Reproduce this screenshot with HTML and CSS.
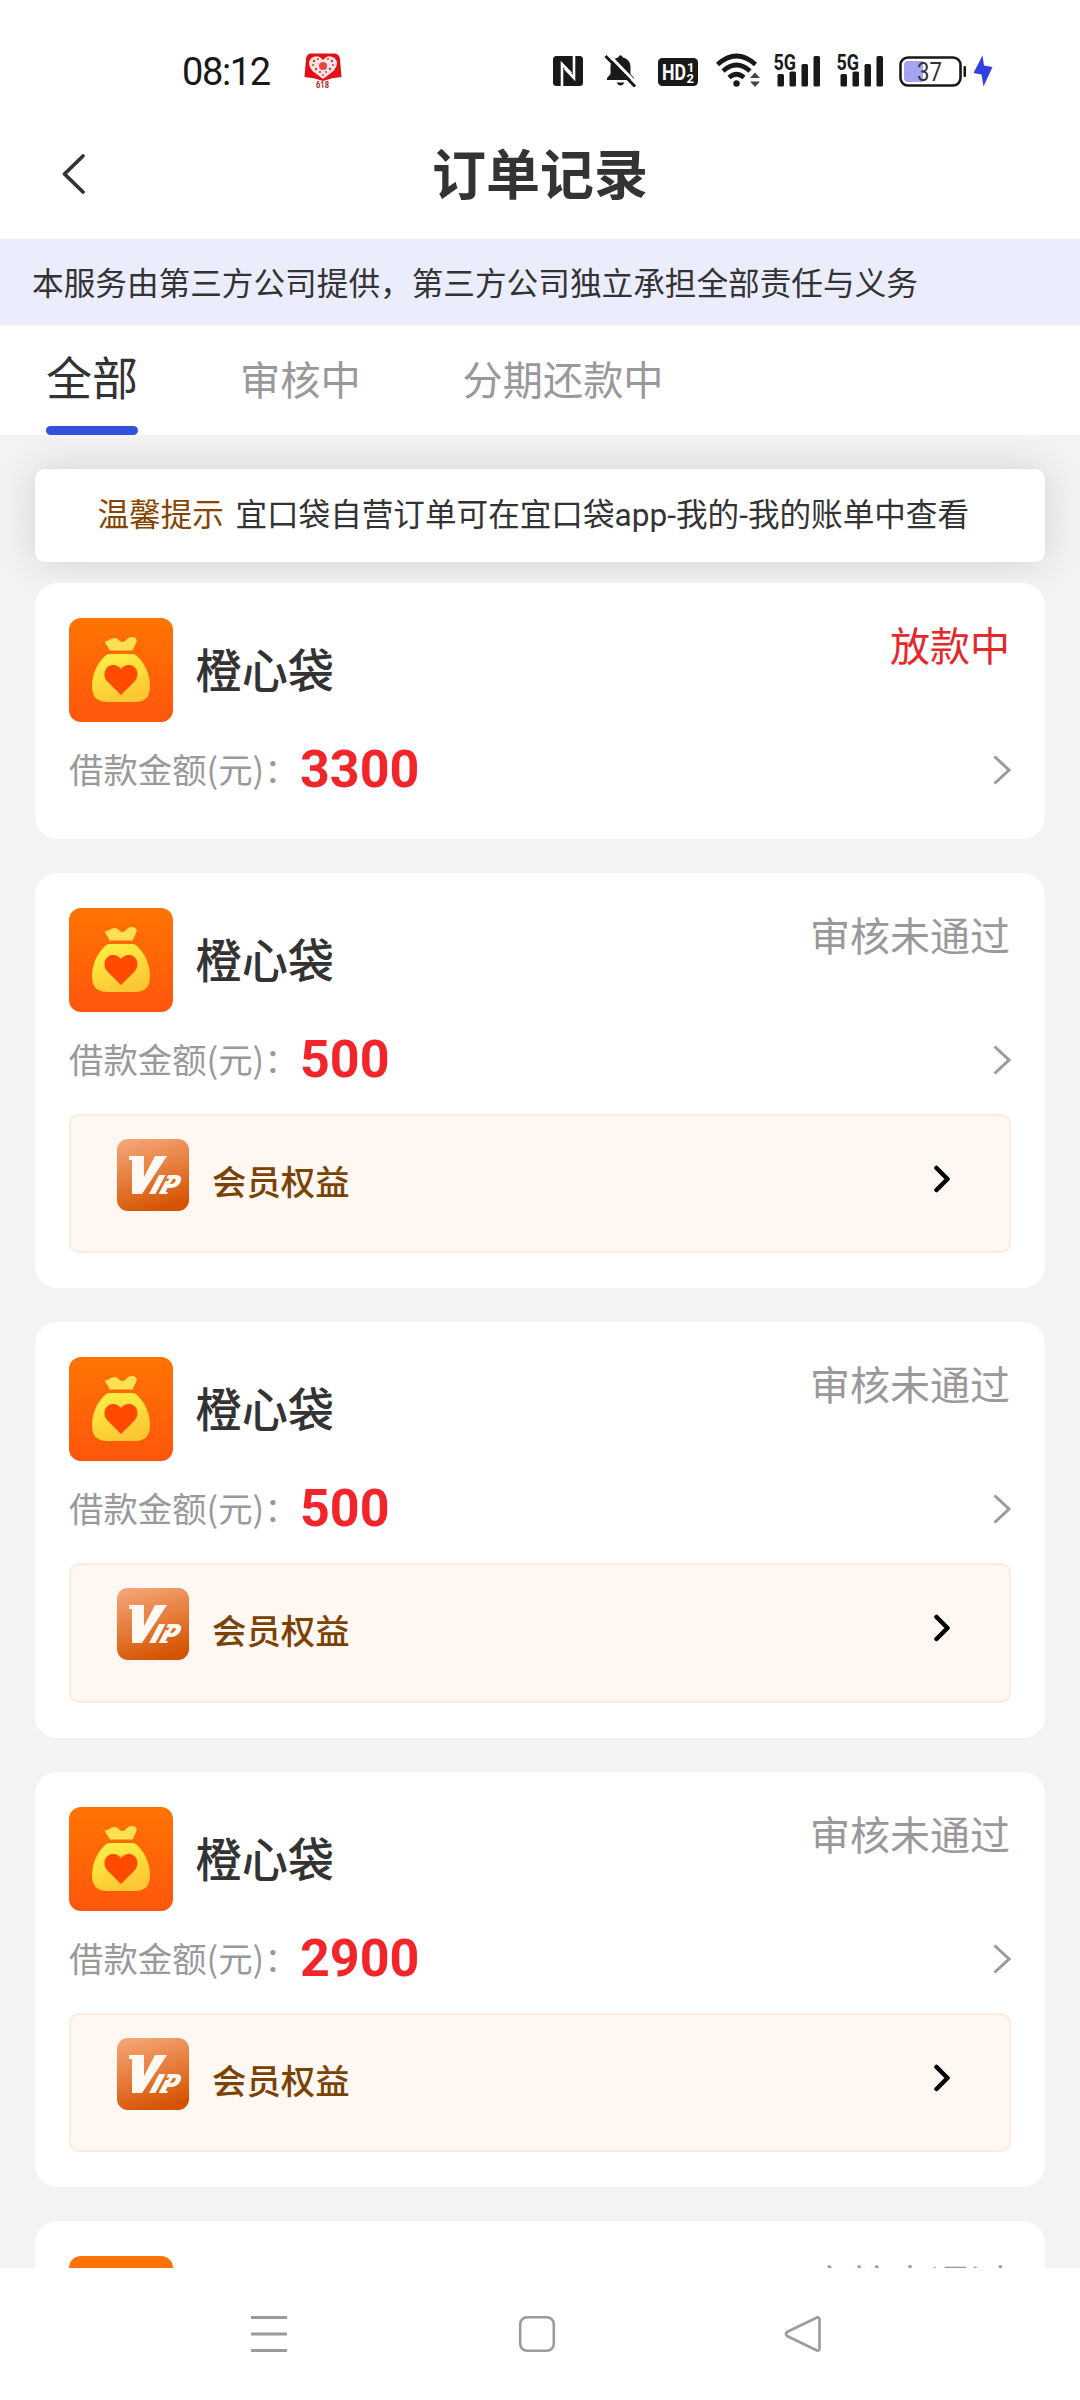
FILE: index.html
```html
<!DOCTYPE html>
<html lang="zh-CN">
<head>
<meta charset="utf-8">
<title>订单记录</title>
<link rel="stylesheet" href="styles.css">
</head>
<body>
<svg class="defs" width="0" height="0" aria-hidden="true">
  <defs>
    <linearGradient id="bagBg" x1="0" y1="0" x2="0" y2="1"><stop offset="0" stop-color="#ff7403"/><stop offset="1" stop-color="#ff560c"/></linearGradient>
    <linearGradient id="bagFill" x1="0" y1="0" x2="0.4" y2="1"><stop offset="0" stop-color="#fff04a"/><stop offset="0.5" stop-color="#fde03c"/><stop offset="1" stop-color="#fdc634"/></linearGradient>
    <linearGradient id="vipBg" x1="0.3" y1="0" x2="0.6" y2="1"><stop offset="0" stop-color="#f3a373"/><stop offset="0.5" stop-color="#e67b38"/><stop offset="1" stop-color="#d45200"/></linearGradient>
    <symbol id="bag" viewBox="0 0 104 104">
      <rect width="104" height="104" rx="12" fill="url(#bagBg)"/>
      <path d="M36 23C39 24 42 19.500 46 20C50 20.500 50 24 53.500 24C57 24 58 19 62.500 19C66 18.500 68.500 21 67.500 24L63.500 32.500H40.500C39.500 28 35.500 26 36 23Z" fill="#ffe052"/>
      <path d="M41 36H63C66 36 67 37 69 39C77 47 81 58 81 68C81 79 76 84 66 84H38C28 84 23 79 23 68C23 58 27 47 35 39C37 37 38 36 41 36Z" fill="url(#bagFill)"/>
      <path d="M52 77L38 63C33 57 36 47 44 47C48 47 50.500 49 52 51C53.500 49 56 47 60 47C68 47 71 57 66 63Z" fill="#ff4a00"/>
    </symbol>
    <symbol id="vip" viewBox="0 0 72 72">
      <rect width="72" height="72" rx="11" fill="url(#vipBg)"/>
      <path d="M12 17H27V38L38 17H50L25 55H15V21H12Z" fill="#fff9f3"/>
      <path d="M42 36H48.500L38.500 55H32Z" fill="#fff9f3"/>
      <path fill-rule="evenodd" d="M51 36H59C65 36 65.500 40.500 62.500 44.500C60 48 57 49 53 49H50.500L48.500 53H51L50 55H41.500L48.500 42H51L52.500 39.500H49.500ZM56 40L53 45H54.500C58 44.500 60 40.500 58 40Z" fill="#fff9f3"/>
    </symbol>
    <symbol id="go" viewBox="0 0 18 30"><path d="M1.500 1.500L16 15L1.500 28.500" fill="none" stroke="#9b9b9b" stroke-width="3"/></symbol>
    <symbol id="goVip" viewBox="0 0 18 28"><path d="M3.500 3L14.500 14L3.500 25" fill="none" stroke="#000" stroke-width="4.500" stroke-linecap="round" stroke-linejoin="round"/></symbol>
    <symbol id="signal" viewBox="0 0 50 36">
      <text x="-0.500" y="16.500" class="signal-text" textLength="22.500" lengthAdjust="spacingAndGlyphs">5G</text>
      <g fill="#191919"><rect x="3.500" y="21" width="6.500" height="12.500" rx="1.500"/><rect x="15.500" y="18.500" width="6.500" height="15" rx="1.500"/><rect x="27.500" y="11" width="6.500" height="22.500" rx="1.500"/><rect x="39.500" y="3" width="6.500" height="30.500" rx="1.500"/></g>
    </symbol>
  </defs>
</svg>
<div class="screen">
  <div class="statusbar">
    <span class="clock">08:12</span>
    <svg class="promo" width="38" height="38" viewBox="0 0 38 38">
      <path d="M6 1.500H31Q35.500 2.500 36 7L37.500 25Q28 25.500 19 29Q10 25.500 .500 25L2 7Q2.500 2.500 6 1.500Z" fill="#e30f16"/>
      <path d="M19 27L8.500 19Q2 11 7.500 6Q14 1.500 19 8Q24 1.500 30.500 6Q36 11 29.500 19Z" fill="#ffe3e3"/>
      <circle cx="19" cy="14" r="4" fill="#e8474a"/>
      <g fill="#d8393d"><circle cx="10" cy="9" r="1.200"/><circle cx="14" cy="7" r="1"/><circle cx="9" cy="13" r="1"/><circle cx="12" cy="17" r="1.200"/><circle cx="16" cy="20" r="1"/><circle cx="19" cy="23" r="1"/><circle cx="28" cy="9" r="1.200"/><circle cx="24" cy="7" r="1"/><circle cx="29" cy="13" r="1"/><circle cx="26" cy="17" r="1.200"/><circle cx="22" cy="20" r="1"/></g>
      <text x="18.500" y="36" text-anchor="middle" class="promo-text" textLength="13" lengthAdjust="spacingAndGlyphs">618</text>
    </svg>
    <svg class="nfc" width="30" height="30" viewBox="0 0 30 30"><rect width="30" height="30" rx="3.500" fill="#191919"/><path d="M9 30V8L18 17.500M21 0V22L12 12.500" fill="none" stroke="#fff" stroke-width="2.600"/></svg>
    <svg class="mute" width="34" height="34" viewBox="0 0 34 34"><path d="M3 26V24L6.500 20V13C6.500 8 9.500 4.500 14 3.500Q16.500-1 19 3.500C23.500 4.500 26.500 8 26.500 13V20L30 24V26ZM12.500 28.500H20.500Q19 31.500 16.500 31.500Q14 31.500 12.500 28.500Z" fill="#191919"/><path d="M4 0L33 30" stroke="#fff" stroke-width="3"/><path d="M1.500 2L31 32.500" stroke="#191919" stroke-width="3"/></svg>
    <svg class="hd" width="40" height="28" viewBox="0 0 40 28"><rect width="40" height="28" rx="4.500" fill="#191919"/><text x="4" y="22" class="hd-text" textLength="24" lengthAdjust="spacingAndGlyphs">HD</text><text x="29" y="13.500" class="hd-small">1</text><text x="28.500" y="25" class="hd-small">2</text></svg>
    <svg class="wifi" width="46" height="36" viewBox="0 0 46 36"><g fill="none" stroke="#191919" stroke-width="4.600"><path d="M1.500 11.500Q20.500-5.500 39.500 11.500"/><path d="M7 18Q20.500 6 34 18"/><path d="M13 24.500Q20.500 18 28 24.500"/></g><circle cx="20.500" cy="30.500" r="3.200" fill="#191919"/><path d="M34 25L39 19.500L44 25ZM34 28.500L39 34L44 28.500Z" fill="#444"/></svg>
    <svg class="sim1" width="50" height="36"><use href="#signal"/></svg>
    <svg class="sim2" width="50" height="36"><use href="#signal"/></svg>
    <svg class="battery" width="68" height="32" viewBox="0 0 68 32"><rect x="1.500" y="1.500" width="60" height="28" rx="7.500" fill="none" stroke="#191919" stroke-width="2.600"/><path d="M9 5H24V26H9Q5 26 5 22V9Q5 5 9 5Z" fill="#a3a4f4"/><rect x="64.500" y="10" width="2.500" height="11" rx="1" fill="#191919"/><text x="18" y="24.500" class="battery-text" textLength="25" lengthAdjust="spacingAndGlyphs">37</text></svg>
    <svg class="bolt" width="20" height="32" viewBox="0 0 20 32"><path d="M9.500 0.500L0.500 18L8.500 19.500L10.500 31.500L19.500 12L11 10.500Z" fill="#2e3fe6"/></svg>
  </div>

  <header class="titlebar">
    <svg class="back" width="26" height="44" viewBox="0 0 26 44"><path d="M23 4L4.500 22L23 40" fill="none" stroke="#333" stroke-width="3.800" stroke-linecap="round" stroke-linejoin="round"/></svg>
    <h1 class="title">订单记录</h1>
  </header>

  <p class="notice">本服务由第三方公司提供，第三方公司独立承担全部责任与义务</p>

  <nav class="tabs">
    <a class="tab tab-active">全部</a>
    <a class="tab">审核中</a>
    <a class="tab">分期还款中</a>
  </nav>

  <main class="content">
    <div class="tip"><span class="tip-label">温馨提示</span><span>宜口袋自营订单可在宜口袋<span class="latin">app-</span>我的<span class="latin">-</span>我的账单中查看</span></div>

    <div class="orders">
      <section class="card">
        <div class="card-head"><svg class="logo"><use href="#bag"/></svg><h2 class="name">橙心袋</h2><span class="state state-active">放款中</span></div>
        <div class="amount-row"><span class="label">借款金额(元)：</span><b class="amount">3300</b><svg class="go"><use href="#go"/></svg></div>
      </section>
      <section class="card">
        <div class="card-head"><svg class="logo"><use href="#bag"/></svg><h2 class="name">橙心袋</h2><span class="state">审核未通过</span></div>
        <div class="amount-row"><span class="label">借款金额(元)：</span><b class="amount">500</b><svg class="go"><use href="#go"/></svg></div>
        <div class="vip"><svg class="vip-icon"><use href="#vip"/></svg><span class="vip-text">会员权益</span><svg class="vip-go"><use href="#goVip"/></svg></div>
      </section>
      <section class="card">
        <div class="card-head"><svg class="logo"><use href="#bag"/></svg><h2 class="name">橙心袋</h2><span class="state">审核未通过</span></div>
        <div class="amount-row"><span class="label">借款金额(元)：</span><b class="amount">500</b><svg class="go"><use href="#go"/></svg></div>
        <div class="vip"><svg class="vip-icon"><use href="#vip"/></svg><span class="vip-text">会员权益</span><svg class="vip-go"><use href="#goVip"/></svg></div>
      </section>
      <section class="card">
        <div class="card-head"><svg class="logo"><use href="#bag"/></svg><h2 class="name">橙心袋</h2><span class="state">审核未通过</span></div>
        <div class="amount-row"><span class="label">借款金额(元)：</span><b class="amount">2900</b><svg class="go"><use href="#go"/></svg></div>
        <div class="vip"><svg class="vip-icon"><use href="#vip"/></svg><span class="vip-text">会员权益</span><svg class="vip-go"><use href="#goVip"/></svg></div>
      </section>
      <section class="card">
        <div class="card-head"><svg class="logo"><use href="#bag"/></svg><span class="state">审核未通过</span></div>
      </section>
    </div>
  </main>

  <footer class="navbar">
    <svg width="38" height="38" viewBox="0 0 38 38"><path d="M1 2.500H37M1 19H37M1 35.500H37" stroke="#9b9b9b" stroke-width="3"/></svg>
    <svg width="38" height="38" viewBox="0 0 38 38"><rect x="2.200" y="2.200" width="33.600" height="33.600" rx="7" fill="none" stroke="#9b9b9b" stroke-width="2.600"/></svg>
    <svg class="nav-back" width="38" height="38" viewBox="0 0 38 38"><path d="M33 2.500L3 17Q1 19 3 21L33 35.500Q35.500 36 35.500 33.500V4.500Q35.500 2 33 2.500Z" fill="none" stroke="#9b9b9b" stroke-width="2.600" stroke-linejoin="round"/></svg>
  </footer>
</div>
</body>
</html>
```
FILE: styles.css
```css
* { box-sizing: border-box; margin: 0; padding: 0; }
body {
  width: 1080px;
  background: #fff;
  color: #333;
  font-family: "Noto Sans CJK SC", sans-serif;
}
svg { display: block; flex: none; }
.defs { position: absolute; }
.screen { height: 2400px; display: flex; flex-direction: column; overflow: hidden; }

.statusbar { height: 110px; flex: none; display: flex; align-items: flex-start; color: #191919; }
.clock { width: 122px; margin: 49.500px 0 0 182px; font: 400 38px/44px Roboto, sans-serif; letter-spacing: -1.400px; }
.promo { margin-top: 52px; }
.nfc { margin: 56px 0 0 211px; }
.mute { margin: 54px 0 0 21px; }
.hd { margin: 58px 0 0 20px; }
.wifi { margin: 53px 0 0 18px; }
.sim1 { margin: 53px 0 0 12px; overflow: visible; }
.sim2 { margin: 53px 0 0 13px; overflow: visible; }
.battery { margin: 56px 0 0 12px; }
.bolt { margin: 55px 0 0 6px; }
.signal-text { font: 700 21.500px Roboto, sans-serif; fill: #191919; }
.promo-text { font: 700 9.500px Roboto, sans-serif; fill: #b8222a; }
.hd-text { font: 700 22px Roboto, sans-serif; fill: #fff; }
.hd-small { font: 700 13px Roboto, sans-serif; fill: #fff; }
.battery-text { font: 400 25px Roboto, sans-serif; fill: #333; }

.titlebar { height: 129px; flex: none; display: grid; grid-template-columns: 100px 1fr 100px; align-items: start; }
.back { margin: 42px 0 0 60px; }
.title { margin-top: 32px; text-align: center; font-size: 54px; line-height: 60px; font-weight: 700; }

.notice { height: 86px; flex: none; padding-left: 32px; background: #ebedfd; font-size: 31.650px; line-height: 85px; }

.tabs { height: 110px; flex: none; display: flex; gap: 102px; padding-left: 46px; }
.tab { padding-top: 2px; font-size: 40.200px; line-height: 102px; color: #999; white-space: nowrap; }
.tab-active { display: flex; flex-direction: column; justify-content: space-between; padding-top: 0; font-size: 46px; line-height: 100px; color: #333; }
.tab-active::after { content: ""; height: 9px; border-radius: 4.500px; background: #3450de; }

.content { flex: 1; min-height: 0; overflow: hidden; padding: 34px 35px 0; background: #f3f3f3; }
.tip {
  height: 93px; display: flex; gap: 11.500px; padding-left: 62.500px;
  border-radius: 10px; background: #fff; box-shadow: 0 0 40px rgba(0, 0, 0, .14);
  font-size: 31.600px; line-height: 87px; white-space: nowrap;
}
.tip-label { color: #864500; }
.latin { font-family: Roboto, sans-serif; }

.orders { margin-top: 21px; display: flex; flex-direction: column; gap: 34px; }
.card { padding: 35px 34px; border-radius: 22px; background: #fff; }
.card-head { height: 104px; display: flex; align-items: flex-start; }
.logo { width: 104px; height: 104px; }
.name { margin: 20px 0 0 22.500px; font-size: 46.200px; line-height: 60px; font-weight: 500; }
.state { margin: -2px 1px 0 auto; font-size: 40px; line-height: 56px; color: #999; }
.state-active { color: #e5282b; }
.amount-row { height: 82px; padding-top: 14px; display: flex; align-items: center; }
.label { font-size: 34.400px; line-height: 68px; margin-top: -4px; color: #999; width: 231px; white-space: nowrap; }
.amount { font: 700 52px/68px Roboto, sans-serif; color: #f2262a; }
.go { width: 18px; height: 30px; margin-left: auto; }
.vip {
  height: 139.350px; margin-top: 20px; padding: 23px 58px 0 46px; display: flex; align-items: flex-start;
  border: 2px solid #fcebe0; border-radius: 10px; background: #fff7f1;
}
.vip-icon { width: 72px; height: 72px; }
.vip-text { margin: 17px 0 0 23px; font-size: 34.400px; line-height: 48px; font-weight: 500; color: #7a4205; }
.vip-go { width: 18px; height: 28px; margin: 26px 0 0 auto; }

.navbar { height: 132px; flex: none; display: flex; gap: 230px; padding: 47px 0 0 250px; background: #fff; }
.nav-back { margin-left: -2px; }
```
